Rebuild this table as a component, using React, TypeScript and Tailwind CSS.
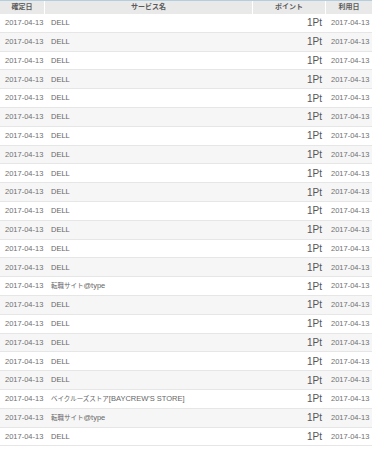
import React from "react";

interface Row {
  fixedOn: string;
  service: string;
  points: number;
  usedOn: string;
}

const D = "2017-04-13";
const names = [
  "DELL", "DELL", "DELL", "DELL", "DELL", "DELL", "DELL", "DELL", "DELL", "DELL",
  "DELL", "DELL", "DELL", "DELL", "転職サイト@type", "DELL", "DELL", "DELL", "DELL", "DELL",
  "ベイクルーズストア[BAYCREW'S STORE]", "転職サイト@type", "DELL",
];

const rows: Row[] = names.map((n) => ({ fixedOn: D, service: n, points: 1, usedOn: D }));

const grid = "grid grid-cols-[45px_208px_73px_1fr]";

// Japanese runs render a bit smaller than the latin text in the source page.
function ServiceName({ text }: { text: string }) {
  const parts = text.split(/([\u3000-\u30ff\u4e00-\u9fff]+)/).filter(Boolean);
  return (
    <>
      {parts.map((p, i) =>
        /[\u3000-\u30ff\u4e00-\u9fff]/.test(p) ? (
          <span key={i} className="text-[6.5px]">{p}</span>
        ) : (
          <span key={i}>{p}</span>
        )
      )}
    </>
  );
}

export default function App() {
  return (
    <div
      className="w-[372px] h-[450px] overflow-hidden bg-white text-[#666]"
      style={{ fontFamily: '"Liberation Sans", "Noto Sans CJK JP", sans-serif' }}
    >
      {/* Header */}
      <div className={`${grid} h-[14px] bg-[#e9e9e9] border-t border-[#b3cfdd] text-[7px] font-bold text-[#5a5a5a]`}>
        <div className="flex items-center justify-center border-r border-white">確定日</div>
        <div className="flex items-center justify-center border-r border-white">サービス名</div>
        <div className="flex items-center justify-center border-r border-white">ポイント</div>
        <div className="flex items-center justify-center">利用日</div>
      </div>

      {/* Body */}
      {rows.map((r, i) => (
        <div
          key={i}
          className={`${grid} h-[18.8px] border-b border-[#e6e6e6] ${i % 2 === 1 ? "bg-[#f6f6f6]" : "bg-white"}`}
        >
          <div className="flex items-center pl-[5px] text-[7.5px] text-[#707070] whitespace-nowrap">{r.fixedOn}</div>
          <div className="flex items-center pl-[6px] text-[7.5px] text-[#666] whitespace-nowrap">
            <ServiceName text={r.service} />
          </div>
          <div className="flex items-center justify-end pr-[4px] text-[10px] text-[#555]">{r.points}Pt</div>
          <div className="flex items-center pl-[5px] text-[7.5px] text-[#707070] whitespace-nowrap">{r.usedOn}</div>
        </div>
      ))}
    </div>
  );
}
